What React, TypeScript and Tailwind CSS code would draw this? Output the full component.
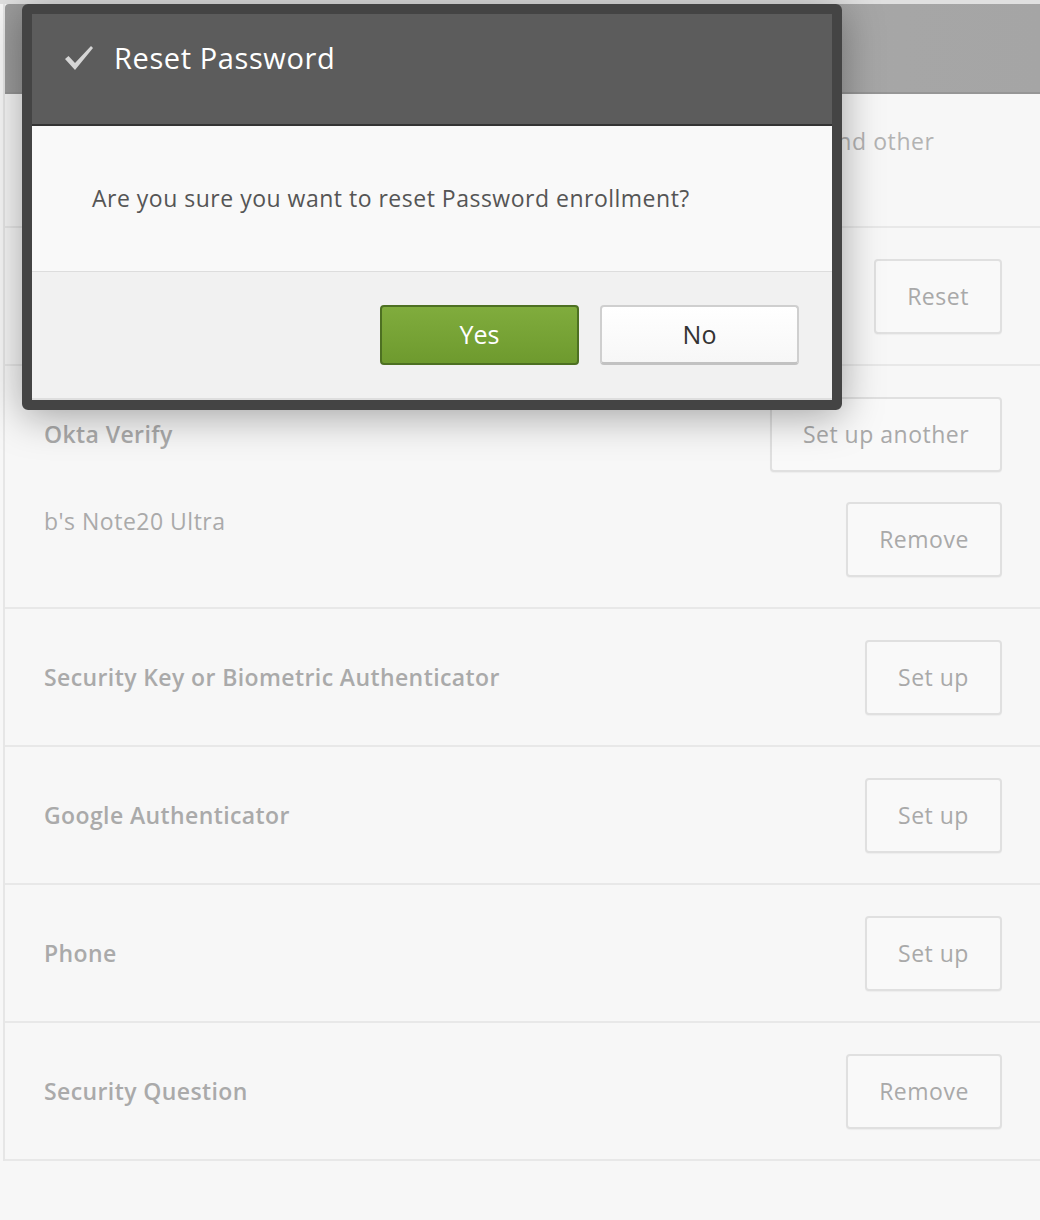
import { ReactNode } from "react";

function GhostButton({ label, width }: { label: string; width: string }) {
  return (
    <button
      className={`h-[75px] ${width} rounded-[4px] border-2 border-[#e0e0e0] bg-[#f9f9f9] text-[23px] tracking-[0.5px] text-[#a9a9a9] shadow-[0_1px_1px_rgba(0,0,0,0.04)]`}
    >
      {label}
    </button>
  );
}

function Row({ label, children }: { label: string; children: ReactNode }) {
  return (
    <div className="flex h-[138px] items-center justify-between border-b-2 border-[#e8e8e8] pl-[39px] pr-[38px]">
      <span className="text-[23px] font-semibold tracking-[0.4px] text-[#aaaaaa]">{label}</span>
      {children}
    </div>
  );
}

function CheckIcon() {
  return (
    <svg width="30" height="26" viewBox="0 0 30 26" className="blur-[0.6px]">
      <path d="M1 14 L4.5 11 L11 18 L27 1 L29 3 L11 25 Z" fill="#d6d6d6" />
    </svg>
  );
}

function ResetModal() {
  return (
    <div className="absolute left-[22px] top-[4px] w-[820px] overflow-hidden rounded-[6px] border-[10px] border-[#444444] shadow-[0_6px_40px_rgba(0,0,0,0.35)]">
      <div className="flex h-[110px] items-center gap-[20px] bg-[#5c5c5c] pb-[22px] pl-[32px]">
        <CheckIcon />
        <h2 className="text-[29px] tracking-[0.6px] text-white">Reset Password</h2>
      </div>
      <div className="h-[2px] bg-[#333333]" />
      <div className="flex h-[146px] items-center border-b border-[#dddddd] bg-[#f9f9f9] pl-[60px]">
        <p className="text-[23px] tracking-[0.5px] text-[#555555]">
          Are you sure you want to reset Password enrollment?
        </p>
      </div>
      <div className="flex h-[128px] items-center justify-end gap-[21px] border-b-2 border-[#dedede] bg-[#f1f1f1] pr-[33px]">
        <button className="h-[60px] w-[199px] rounded-[4px] border-2 border-[#4d7022] bg-[linear-gradient(#80ac3d,#6e9a2e)] text-[25px] text-white">
          Yes
        </button>
        <button className="h-[60px] w-[199px] rounded-[4px] border-2 border-[#cfcfcf] border-b-[3px] border-b-[#c2c2c2] bg-[linear-gradient(#ffffff,#f7f7f7)] text-[25px] text-[#333333]">
          No
        </button>
      </div>
    </div>
  );
}

export default function App() {
  return (
    <div className="relative h-[1220px] w-[1040px] overflow-hidden bg-[#f7f7f7] font-['Open_Sans',sans-serif]">
      <div className="h-[4px] bg-[#e0e0e0]" />
      <div className="ml-[3px] border-l-2 border-[#e6e6e6]">
        <div className="h-[90px] rounded-tl-[4px] border-b-2 border-[#969696] bg-[linear-gradient(90deg,#9c9c9c,#a8a8a8_60%,#a5a5a5)]" />

        <div className="h-[134px] border-b-2 border-[#e8e8e8] pl-[39px] pt-[33px]">
          <p className="whitespace-nowrap text-[23px] leading-[28px] tracking-[0.6px] text-[#b3b3b3]">
            Security methods help your account security when signing in to Okta and other
          </p>
        </div>

        <Row label="Password">
          <GhostButton label="Reset" width="w-[128px]" />
        </Row>

        <div className="flex h-[243px] flex-col justify-between border-b-2 border-[#e8e8e8] pb-[30px] pl-[39px] pr-[38px] pt-[31px]">
          <div className="flex items-center justify-between">
            <span className="text-[23px] font-semibold tracking-[0.4px] text-[#aaaaaa]">Okta Verify</span>
            <GhostButton label="Set up another" width="w-[232px]" />
          </div>
          <div className="flex items-start justify-between">
            <span className="pt-[2px] text-[23px] tracking-[0.5px] text-[#aaaaaa]">b's Note20 Ultra</span>
            <GhostButton label="Remove" width="w-[156px]" />
          </div>
        </div>

        <Row label="Security Key or Biometric Authenticator">
          <GhostButton label="Set up" width="w-[137px]" />
        </Row>
        <Row label="Google Authenticator">
          <GhostButton label="Set up" width="w-[137px]" />
        </Row>
        <Row label="Phone">
          <GhostButton label="Set up" width="w-[137px]" />
        </Row>
        <Row label="Security Question">
          <GhostButton label="Remove" width="w-[156px]" />
        </Row>
      </div>

      <ResetModal />
    </div>
  );
}
